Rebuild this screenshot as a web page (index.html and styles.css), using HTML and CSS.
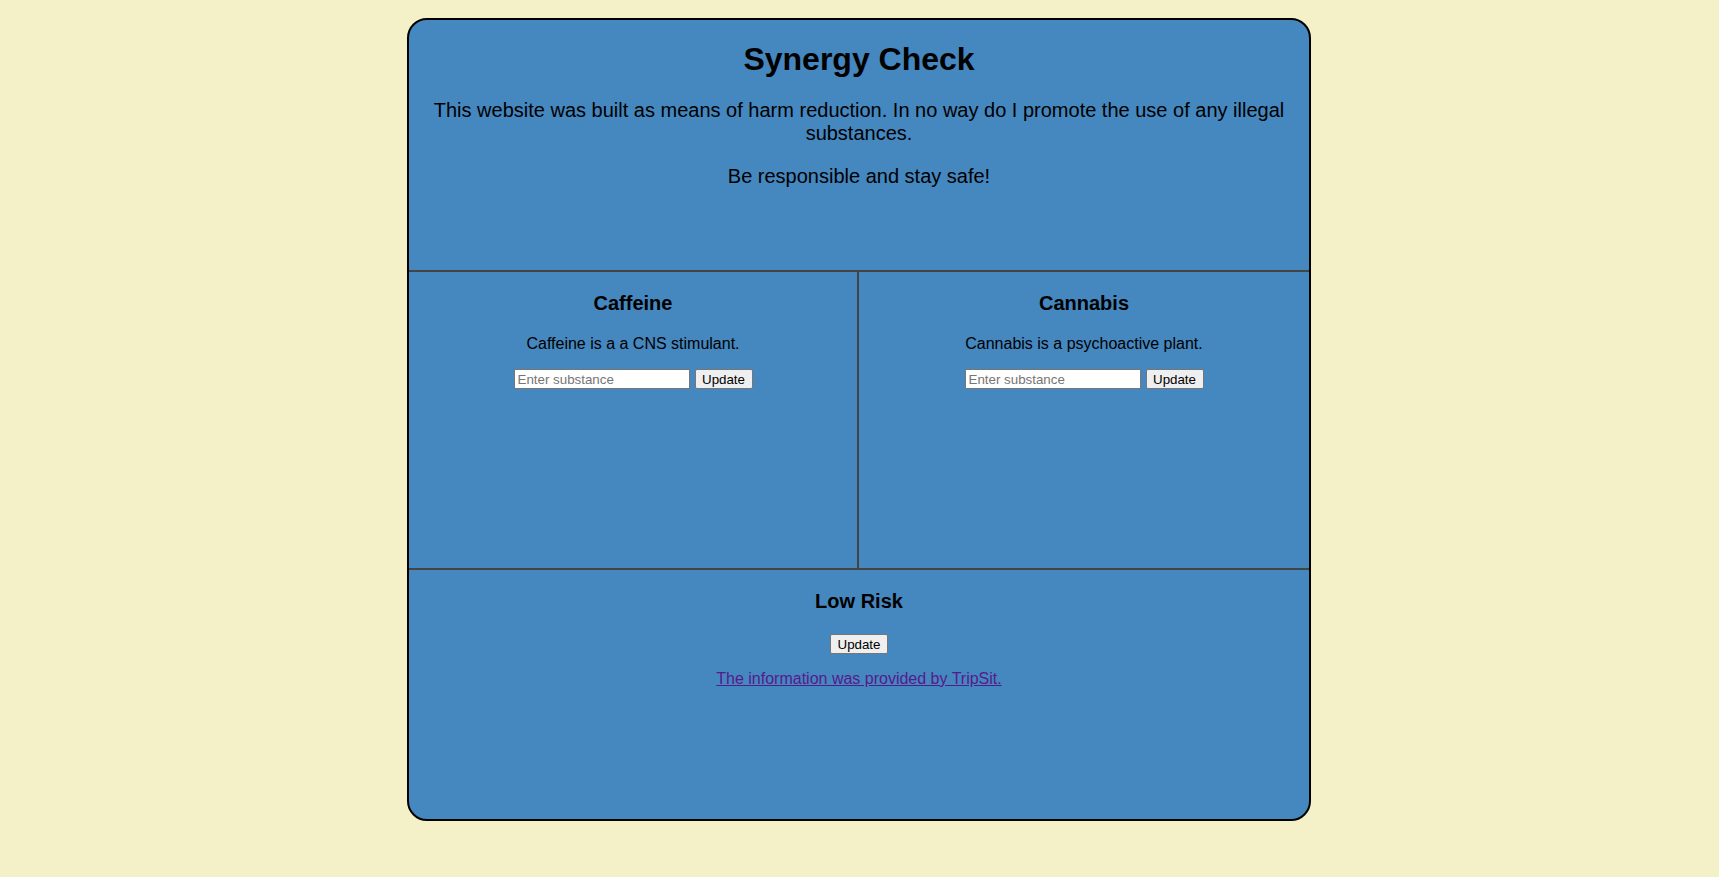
FILE: index.html
```html
<!DOCTYPE html>
<html lang="en">
<head>
<meta charset="utf-8">
<title>Synergy Check</title>
<link rel="stylesheet" href="styles.css">
</head>
<body>
<div class="card">
  <section class="intro">
    <h1 class="title">Synergy Check</h1>
    <p class="lead">This website was built as means of harm reduction. In no way do I promote the use of any illegal substances.</p>
    <p class="lead">Be responsible and stay safe!</p>
  </section>
  <div class="pair">
    <section class="substance left">
      <h3 class="sub-title">Caffeine</h3>
      <p class="sub-desc">Caffeine is a a CNS stimulant.</p>
      <div class="form-row">
        <input class="sub-input" type="text" placeholder="Enter substance">
        <button class="btn" type="button">Update</button>
      </div>
    </section>
    <section class="substance">
      <h3 class="sub-title">Cannabis</h3>
      <p class="sub-desc">Cannabis is a psychoactive plant.</p>
      <div class="form-row">
        <input class="sub-input" type="text" placeholder="Enter substance">
        <button class="btn" type="button">Update</button>
      </div>
    </section>
  </div>
  <section class="result">
    <h3 class="sub-title">Low Risk</h3>
    <div class="form-row result-row">
      <button class="btn" type="button">Update</button>
    </div>
    <p class="credit"><a class="credit-link" href="#">The information was provided by TripSit.</a></p>
  </section>
</div>
</body>
</html>
```

FILE: styles.css
```css
html, body {
  margin: 0;
  padding: 0;
}
body {
  background: #f4f1c8;
  font-family: "Liberation Sans", Arial, sans-serif;
  color: #000;
  padding-top: 18px;
  padding-right: 1px;
}
.card {
  width: 900px;
  margin: 0 auto;
  border: 2px solid #000;
  border-radius: 20px;
  background: #4587bf;
  display: grid;
  grid-template-rows: 252px 298px 249px;
  overflow: hidden;
}
.intro {
  padding: 0 20px;
  text-align: center;
  border-bottom: 2px solid #444;
}
.title {
  font-size: 32px;
  margin: 21px 0;
  line-height: 37px;
}
.lead {
  font-size: 20px;
  line-height: 23px;
  margin: 20px 0;
}
.pair {
  display: grid;
  grid-template-columns: 450px 1fr;
  border-bottom: 2px solid #444;
}
.substance {
  text-align: center;
}
.left {
  border-right: 2px solid #444;
}
.sub-title {
  font-size: 20px;
  line-height: 23px;
  margin: 20px 0;
}
.sub-desc {
  font-size: 16px;
  line-height: 18px;
  margin: 16px 0;
}
.form-row {
  display: flex;
  justify-content: center;
  gap: 5px;
}
.result-row {
  padding-top: 1px;
}
.sub-input {
  box-sizing: border-box;
  width: 176px;
  height: 20px;
  margin: 0;
  padding: 1px 3px;
  border: 1px solid #767676;
  background: #fff;
  font-family: "Liberation Sans", Arial, sans-serif;
  font-size: 13.33px;
}
.sub-input::placeholder {
  color: #757575;
}
.btn {
  box-sizing: border-box;
  height: 20px;
  min-width: 58px;
  margin: 0;
  padding: 1px 6px;
  border: 1px solid #767676;
  border-radius: 2px;
  background: #efefef;
  font-family: "Liberation Sans", Arial, sans-serif;
  font-size: 13.33px;
  color: #000;
}
.result {
  text-align: center;
}
.credit {
  font-size: 16px;
  line-height: 18px;
  margin: 16px 0;
}
.credit-link {
  color: #551a8b;
  text-decoration: underline;
}
```
